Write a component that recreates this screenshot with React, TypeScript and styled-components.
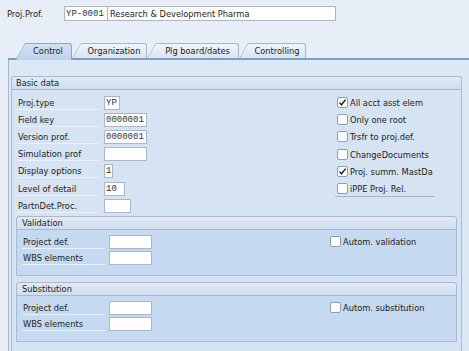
import styled, { createGlobalStyle } from "styled-components";

const GlobalStyle = createGlobalStyle`
  html, body {
    margin: 0;
    padding: 0;
    background: #e7eef7;
  }
  body {
    font-family: "DejaVu Sans Condensed", "DejaVu Sans", "Liberation Sans", sans-serif;
    font-stretch: condensed;
    font-size: 9.2px;
    color: #1c1c1c;
  }
`;

const Page = styled.div`
  display: flex;
  flex-direction: column;
  width: 469px;
  height: 351px;
  overflow: hidden;
`;

const TopBar = styled.div`
  display: flex;
  align-items: center;
  height: 15px;
  padding: 6px 0 0 7px;
`;

const TopLabel = styled.span`
  width: 57px;
`;

const Field = styled.div<{ $w: number; $mono?: boolean }>`
  box-sizing: border-box;
  width: ${(p) => p.$w}px;
  height: 14px;
  padding: ${(p) => (p.$mono ? "0 1px" : "0 2px")};
  display: flex;
  align-items: center;
  background: #ffffff;
  border: 1px solid #a9b7c8;
  font-family: ${(p) =>
    p.$mono ? '"Liberation Mono", monospace' : "inherit"};
  font-size: ${(p) => (p.$mono ? "9px" : "inherit")};
  color: ${(p) => (p.$mono ? "#333" : "inherit")};
  white-space: nowrap;
  overflow: hidden;
`;

const TopField = styled(Field)`
  height: 15px;
  & + & {
    margin-left: -1px;
  }
`;

const TabStrip = styled.div`
  display: flex;
  align-items: flex-end;
  margin: 22px 0 0 8px;
  padding-left: 7px;
  height: 15px;
  border-bottom: 2px solid #7c9ec8;
`;

const Tab = styled.div<{ $active?: boolean; $w: number }>`
  position: relative;
  box-sizing: border-box;
  width: ${(p) => p.$w}px;
  height: 15px;
  padding-left: 9px;
  display: flex;
  align-items: center;
  justify-content: center;
  z-index: ${(p) => (p.$active ? 2 : 1)};

  &::before,
  &::after {
    content: "";
    position: absolute;
    top: 0;
    bottom: ${(p) => (p.$active ? "-2px" : "0")};
    background: ${(p) =>
      p.$active
        ? "linear-gradient(#d3e2f4, #bdd2eb)"
        : "linear-gradient(#f0f5fa, #d9e4f0)"};
    border-top: 1px solid ${(p) => (p.$active ? "#8ba7ca" : "#a2b6ce")};
  }

  &::before {
    left: 10px;
    right: 0;
    border-right: 1px solid ${(p) => (p.$active ? "#8ba7ca" : "#a2b6ce")};
    border-top-right-radius: 3px;
  }

  &::after {
    left: 0;
    width: 14px;
    border-left: 1px solid ${(p) => (p.$active ? "#8ba7ca" : "#a2b6ce")};
    border-top-left-radius: 2px;
    transform-origin: bottom left;
    transform: skewX(-30deg);
  }

  span {
    position: relative;
    z-index: 1;
  }
`;

const Panel = styled.div`
  flex: 1;
  margin-left: 8px;
  padding: 16px 7px 0 2px;
  background: #dde8f5;
  border-left: 1px solid #a3b7cf;
  display: flex;
  flex-direction: column;
`;

const Group = styled.div<{ $tone: "light" | "dark"; $open?: boolean }>`
  display: flex;
  flex-direction: column;
  flex: ${(p) => (p.$open ? 1 : "none")};
  background: ${(p) => (p.$tone === "light" ? "#d5e3f3" : "#c5d9f0")};
  border: 1px solid #a7bad1;
  border-bottom: ${(p) => (p.$open ? "none" : "1px solid #a7bad1")};
  border-radius: 3px 3px 0 0;
`;

const GroupHeader = styled.div<{ $indent: number }>`
  height: 12px;
  line-height: 12px;
  padding-left: ${(p) => p.$indent}px;
  background: linear-gradient(#e2eaf5, #d0ddee);
  border-bottom: 1px solid #a7bad1;
  border-radius: 3px 3px 0 0;
`;

const GroupBody = styled.div<{ $pad: string }>`
  display: flex;
  padding: ${(p) => p.$pad};
`;

const FieldColumn = styled.div<{ $w: number }>`
  width: ${(p) => p.$w}px;
  display: flex;
  flex-direction: column;
`;

const Row = styled.div<{ $h: number }>`
  display: flex;
  align-items: center;
  height: ${(p) => p.$h}px;
`;

const Label = styled.span<{ $w: number }>`
  box-sizing: border-box;
  width: ${(p) => p.$w}px;
  height: 14px;
  line-height: 13px;
  margin-right: 4px;
  padding-left: 1px;
  border-bottom: 1px solid #eaf1fa;
`;

const CheckColumn = styled.div`
  display: flex;
  flex-direction: column;
`;

const CheckRow = styled.label<{ $h: number; $rule?: boolean }>`
  position: relative;
  display: flex;
  align-items: center;
  gap: 2px;
  height: ${(p) => p.$h}px;
  &::after {
    content: "";
    display: ${(p) => (p.$rule ? "block" : "none")};
    position: absolute;
    left: -2px;
    width: 100px;
    bottom: 0;
    border-bottom: 1px solid #a8b6c6;
  }
`;

const Box = styled.span`
  box-sizing: border-box;
  width: 11px;
  height: 11px;
  background: #ffffff;
  border: 1px solid #8d9fb5;
  border-radius: 2px;
  display: flex;
  align-items: center;
  justify-content: center;
`;

const SubGroups = styled.div`
  display: flex;
  flex-direction: column;
  gap: 6px;
  margin: 2px 4px 0 4px;
`;

function Check({ on }: { on?: boolean }) {
  return (
    <Box>
      {on && (
        <svg width="9" height="9" viewBox="0 0 9 9">
          <path
            d="M1.5 4.6 L3.5 6.8 L7.6 1.6"
            fill="none"
            stroke="#1e1e1e"
            strokeWidth="1.4"
          />
        </svg>
      )}
    </Box>
  );
}

const basic: [string, number, string][] = [
  ["Proj.type", 16, "YP"],
  ["Field key", 43, "0000001"],
  ["Version prof.", 43, "0000001"],
  ["Simulation prof", 43, ""],
  ["Display options", 9, "1"],
  ["Level of detail", 21, "10"],
  ["PartnDet.Proc.", 27, ""],
];

const flags: [string, boolean][] = [
  ["All acct asst elem", true],
  ["Only one root", false],
  ["Trsfr to proj.def.", false],
  ["ChangeDocuments", false],
  ["Proj. summ. MastDa", true],
  ["iPPE Proj. Rel.", false],
];

const tabs: [string, number][] = [
  ["Control", 57],
  ["Organization", 75],
  ["Plg board/dates", 92],
  ["Controlling", 67],
];

function RuleGroup({ title, check }: { title: string; check: string }) {
  return (
    <Group $tone="dark">
      <GroupHeader $indent={5}>{title}</GroupHeader>
      <GroupBody $pad="3px 0 9px 5px">
        <FieldColumn $w={308}>
          <Row $h={16.5}>
            <Label $w={83}>Project def.</Label>
            <Field $w={43} />
          </Row>
          <Row $h={16.5}>
            <Label $w={83}>WBS elements</Label>
            <Field $w={43} />
          </Row>
        </FieldColumn>
        <CheckColumn>
          <CheckRow $h={16.5}>
            <Check />
            {check}
          </CheckRow>
        </CheckColumn>
      </GroupBody>
    </Group>
  );
}

export default function App() {
  return (
    <Page>
      <GlobalStyle />
      <TopBar>
        <TopLabel>Proj.Prof.</TopLabel>
        <TopField $w={44} $mono>
          YP-0001
        </TopField>
        <TopField $w={229}>Research &amp; Development Pharma</TopField>
      </TopBar>

      <TabStrip>
        {tabs.map(([name, w], i) => (
          <Tab key={name} $w={w} $active={i === 0}>
            <span>{name}</span>
          </Tab>
        ))}
      </TabStrip>

      <Panel>
        <Group $tone="light" $open>
          <GroupHeader $indent={4}>Basic data</GroupHeader>
          <GroupBody $pad="4px 0 0 5px">
            <FieldColumn $w={320}>
              {basic.map(([label, w, value]) => (
                <Row key={label} $h={17.2}>
                  <Label $w={83}>{label}</Label>
                  <Field $w={w} $mono>
                    {value}
                  </Field>
                </Row>
              ))}
            </FieldColumn>
            <CheckColumn>
              {flags.map(([label, on], i) => (
                <CheckRow key={label} $h={17.2} $rule={i === flags.length - 1}>
                  <Check on={on} />
                  {label}
                </CheckRow>
              ))}
            </CheckColumn>
          </GroupBody>
          <SubGroups>
            <RuleGroup title="Validation" check="Autom. validation" />
            <RuleGroup title="Substitution" check="Autom. substitution" />
          </SubGroups>
        </Group>
      </Panel>
    </Page>
  );
}
